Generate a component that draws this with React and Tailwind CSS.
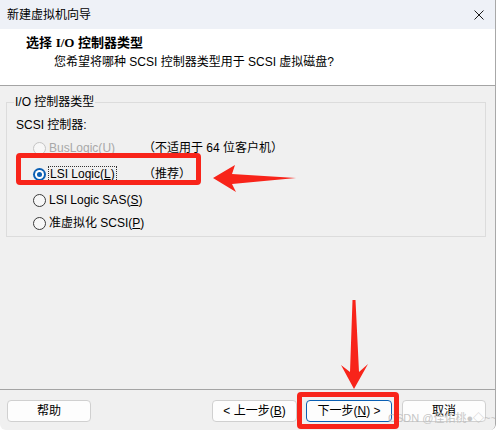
const font = { fontFamily: '"Liberation Sans", "Noto Sans CJK SC", sans-serif' };

function Radio({ checked, disabled }) {
  if (checked) {
    return (
      <span className="flex h-[13px] w-[13px] shrink-0 items-center justify-center rounded-full bg-[#0a5fb4]">
        <span className="flex h-[9px] w-[9px] items-center justify-center rounded-full bg-white">
          <span className="h-[5px] w-[5px] rounded-full bg-[#0a5fb4]" />
        </span>
      </span>
    );
  }
  return (
    <span
      className={`h-[13px] w-[13px] shrink-0 rounded-full border bg-[#f7f7f7] ${
        disabled ? 'border-[#c4c4c4]' : 'border-[#3a3a3a]'
      }`}
    />
  );
}

function Button({ children, primary }) {
  return (
    <div
      className={`flex h-[22px] items-center justify-center rounded-[4px] border bg-[#fdfdfd] text-[12px] text-black ${
        primary ? 'border-[#0a5fb4]' : 'border-[#d0d0d0]'
      }`}
    >
      {children}
    </div>
  );
}

export default function App() {
  return (
    <div className="min-h-screen bg-white" style={font}>
      <div className="relative flex h-[430px] w-[496px] flex-col overflow-hidden rounded-b-[6px] border-r border-[#a8a8a8]">
        {/* title bar */}
        <div className="flex h-[29px] shrink-0 items-center justify-between bg-[#eef1f7] pl-[7px] pr-[11px]">
          <span className="text-[12px] text-black">新建虚拟机向导</span>
          <svg width="10" height="10" viewBox="0 0 10 10">
            <path d="M0.5 0.5 L9.5 9.5 M9.5 0.5 L0.5 9.5" stroke="#1a1a1a" strokeWidth="1" />
          </svg>
        </div>

        {/* header */}
        <div className="h-[57px] shrink-0 border-b border-[#a4a4a4] bg-white pl-[26px] pt-[5px]">
          <div className="text-[13px] font-bold leading-[17px] text-black">
            选择 <span style={{ fontFamily: '"Liberation Serif", serif' }}>I/O</span> 控制器类型
          </div>
          <div className="mt-[3px] pl-[28px] text-[12px] leading-[16px] text-black">
            您希望将哪种 SCSI 控制器类型用于 SCSI 虚拟磁盘?
          </div>
        </div>

        {/* body */}
        <div className="flex-1 bg-[#f0f0f0] pt-[8px]">
          <fieldset className="ml-[6px] w-[480px] border border-[#dcdcdc] pb-[5px] pl-[9px]">
            <legend className="ml-[-2px] px-[1px] text-[12px] leading-[16px] text-black">I/O 控制器类型</legend>
            <div className="mt-[7px] text-[12px] leading-[16px] text-black">SCSI 控制器:</div>

            <div className="mt-[7px] flex h-[16px] items-center pl-[17px] text-[12px]">
              <Radio disabled />
              <span className="ml-[3px] w-[94px] text-[#a8a8a8]">
                BusLogic(<span className="underline">U</span>)
              </span>
              <span className="text-black">（不适用于 64 位客户机）</span>
            </div>

            <div className="mt-[10px] flex h-[16px] items-center pl-[17px] text-[12px]">
              <Radio checked />
              <span className="ml-[2px] w-[95px]">
                <span className="border border-dotted border-[#333] px-[1px] text-black">
                  LSI Logic(<span className="underline">L</span>)
                </span>
              </span>
              <span className="text-black">（推荐）</span>
            </div>

            <div className="mt-[10px] flex h-[16px] items-center pl-[17px] text-[12px]">
              <Radio />
              <span className="ml-[3px] text-black">
                LSI Logic SAS(<span className="underline">S</span>)
              </span>
            </div>

            <div className="mt-[7px] flex h-[16px] items-center pl-[17px] text-[12px]">
              <Radio />
              <span className="ml-[3px] text-black">
                准虚拟化 SCSI(<span className="underline">P</span>)
              </span>
            </div>
          </fieldset>
        </div>

        {/* footer */}
        <div className="flex h-[41px] shrink-0 border-t border-[#a4a4a4] bg-[#f0f0f0] pl-[7px] pt-[10px]">
          <div className="w-[84px]">
            <Button>帮助</Button>
          </div>
          <div className="ml-[121px] w-[85px]">
            <Button>
              &lt; 上一步(<span className="underline">B</span>)
            </Button>
          </div>
          <div className="ml-[9px] w-[86px]">
            <Button primary>
              下一步(<span className="underline">N</span>) &gt;
            </Button>
          </div>
          <div className="ml-[10px] w-[84px]">
            <Button>取消</Button>
          </div>
        </div>

        {/* watermark */}
        <div className="pointer-events-none absolute left-[388px] top-[410px] whitespace-nowrap text-[11px] text-[#b8b8b8] opacity-80">
          CSDN @佳佑桃●◇~~
        </div>

        {/* annotations */}
        <div className="pointer-events-none absolute left-[16px] top-[153px] h-[32px] w-[185px] rounded-[4px] border-[5px] border-[#f8241a]" />
        <div className="pointer-events-none absolute left-[297px] top-[392px] h-[37px] w-[102px] rounded-[4px] border-[5px] border-[#f8241a]" />
        <svg className="pointer-events-none absolute left-0 top-0" width="496" height="430">
          <polygon points="213,178 235,165 232,174 296,178 232,184 236,192" fill="#f8241a" />
          <polygon points="352.5,300 355.5,300 359,372 368,364 354,389 341,365 350,372" fill="#f8241a" />
        </svg>
      </div>
    </div>
  );
}
